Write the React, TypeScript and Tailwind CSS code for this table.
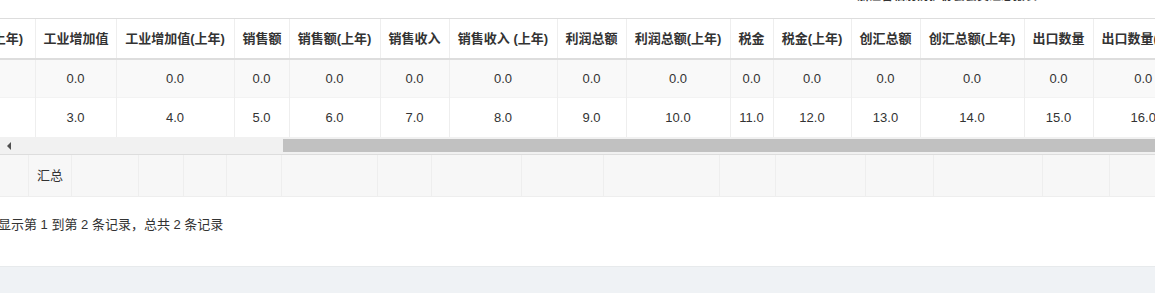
const columns = [
  { title: '资产总额(上年)', width: 110 },
  { title: '工业增加值', width: 81 },
  { title: '工业增加值(上年)', width: 118 },
  { title: '销售额', width: 55 },
  { title: '销售额(上年)', width: 91 },
  { title: '销售收入', width: 69 },
  { title: '销售收入 (上年)', width: 108 },
  { title: '利润总额', width: 69 },
  { title: '利润总额(上年)', width: 104 },
  { title: '税金', width: 43 },
  { title: '税金(上年)', width: 78 },
  { title: '创汇总额', width: 69 },
  { title: '创汇总额(上年)', width: 104 },
  { title: '出口数量', width: 69 },
  { title: '出口数量(上年)', width: 100 },
];

const rows = [
  ['0.0', '0.0', '0.0', '0.0', '0.0', '0.0', '0.0', '0.0', '0.0', '0.0', '0.0', '0.0', '0.0', '0.0', '0.0'],
  ['', '3.0', '4.0', '5.0', '6.0', '7.0', '8.0', '9.0', '10.0', '11.0', '12.0', '13.0', '14.0', '15.0', '16.0'],
];

// footer table has its own column widths
const footerWidths = [29, 43, 67, 45, 43, 55, 96, 54, 90, 82, 116, 56, 90, 68, 109, 67, 60];

export default function App() {
  return (
    <div
      className="w-[1155px] h-[293px] overflow-hidden bg-white text-[13px] text-[#333]"
      style={{ fontFamily: '"Liberation Sans", "Noto Sans CJK SC", sans-serif' }}
    >
      {/* report title, mostly scrolled out of view */}
      <div className="h-[18px] overflow-hidden flex justify-end pr-[118px]">
        <div className="-mt-[13px] text-[12px] font-bold leading-[18px] text-[#333]">
          浙江省辐射防护协会会员汇总报表
        </div>
      </div>

      {/* table body, scrolled horizontally */}
      <div className="overflow-hidden border-t border-[#ddd]">
        <table className="table-fixed border-collapse -ml-[75px]" style={{ width: 1258 }}>
          <colgroup>
            {columns.map((c) => (
              <col key={c.title} style={{ width: c.width }} />
            ))}
          </colgroup>
          <thead>
            <tr className="h-[40px] border-b-2 border-[#ddd]">
              {columns.map((c) => (
                <th
                  key={c.title}
                  className="px-2 font-bold text-center whitespace-nowrap border-l border-[#eee] first:border-l-0"
                >
                  {c.title}
                </th>
              ))}
            </tr>
          </thead>
          <tbody>
            {rows.map((r, i) => (
              <tr
                key={i}
                className={
                  i === 0
                    ? 'h-[38px] bg-[#f9f9f9]'
                    : 'h-[40px] bg-white border-t border-[#f3f3f3]'
                }
              >
                {r.map((v, j) => (
                  <td
                    key={j}
                    className="px-2 text-center whitespace-nowrap border-l border-[#eee] first:border-l-0"
                  >
                    {v}
                  </td>
                ))}
              </tr>
            ))}
          </tbody>
        </table>
      </div>

      {/* horizontal scrollbar */}
      <div className="h-[18px] bg-[#f1f1f1] flex items-center border-b border-[#ddd]">
        <div className="w-[17px] flex justify-center">
          <div className="w-0 h-0 border-y-[4px] border-y-transparent border-r-[4px] border-r-[#505050]" />
        </div>
        <div className="ml-[266px] flex-1 h-[13px] bg-[#c1c1c1]" />
      </div>

      {/* footer totals */}
      <div className="h-[42px] bg-[#f7f7f7] border-b border-[#eee] flex">
        {footerWidths.map((w, i) => (
          <div
            key={i}
            className="shrink-0 flex items-center pl-2 border-r border-[#eee]"
            style={{ width: w }}
          >
            {i === 1 ? '汇总' : ''}
          </div>
        ))}
      </div>

      {/* pagination info */}
      <div className="h-[70px] pt-[19px] leading-[18px] -ml-[2px] border-b border-[#e7eaec]">
        显示第 1 到第 2 条记录，总共 2 条记录
      </div>

      <div className="h-[30px] bg-[#eff2f5]" />
    </div>
  );
}
